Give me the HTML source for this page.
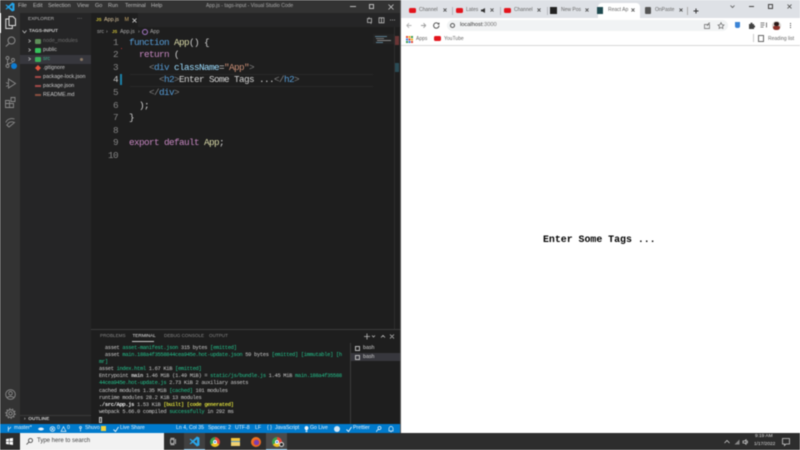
<!DOCTYPE html>
<html><head><meta charset="utf-8"><style>
*{box-sizing:border-box}
html,body{margin:0;padding:0;width:800px;height:450px;overflow:hidden;background:#fff}
#r{position:absolute;left:0;top:0;width:800px;height:450px;overflow:hidden;filter:blur(.45px);font-family:"Liberation Sans",sans-serif}
.b{position:absolute}
.t{position:absolute;white-space:pre;line-height:1}
.c{font-family:"Liberation Mono",monospace;font-size:9.3px;letter-spacing:-.58px;color:#d4d4d4}
.m{font-family:"Liberation Mono",monospace;font-size:5.4px;letter-spacing:-.31px;color:#ccc}
.n{font-family:"Liberation Mono",monospace;font-size:9.3px;letter-spacing:-.58px;color:#858585;text-align:right;width:12px;left:106px}
.s{font-size:5.5px;color:#bbb}
.x{font-size:5.3px;color:#ccc}
.st{font-size:5.2px;color:#e8f3fb;top:426px}
.ct{font-size:5px;color:#666}
.k{color:#569cd6}.f{color:#dcdcaa}.p{color:#c586c0}.a{color:#808080}.v{color:#9cdcfe}.g{color:#ce9178}
.gr{color:#23c48e}.y{color:#d5d53a}
svg{position:absolute;overflow:visible}
</style></head><body><div id="r">

<!-- VS Code backgrounds -->
<div class="b" style="left:0;top:0;width:400px;height:13px;background:#333"></div>
<div class="b" style="left:0;top:13px;width:20px;height:411px;background:#333"></div>
<div class="b" style="left:20px;top:13px;width:71px;height:411px;background:#252526"></div>
<div class="b" style="left:91px;top:13px;width:309px;height:411px;background:#1e1e1e"></div>
<div class="b" style="left:91px;top:13px;width:309px;height:14px;background:#252526"></div>
<div class="b" style="left:91px;top:13px;width:47px;height:14px;background:#1e1e1e"></div>
<div class="b" style="left:400px;top:0;width:1px;height:433px;background:#555"></div>

<!-- Title bar -->
<svg style="left:5px;top:2px" width="10" height="10" viewBox="0 0 10 10"><path d="M7.2 .5 3.4 4 1.4 2.5.5 3l2 2-2 2 .9.5 2-1.500 3.800 3.500 2.300-1V1.500zM7.300 3 4.800 5l2.500 2z" fill="#23a3e8" fill-rule="evenodd"/></svg>
<span class="t s" style="left:18px;top:4px">File</span>
<span class="t s" style="left:33px;top:4px">Edit</span>
<span class="t s" style="left:48px;top:4px">Selection</span>
<span class="t s" style="left:77px;top:4px">View</span>
<span class="t s" style="left:95px;top:4px">Go</span>
<span class="t s" style="left:108px;top:4px">Run</span>
<span class="t s" style="left:125px;top:4px">Terminal</span>
<span class="t s" style="left:151px;top:4px">Help</span>
<span class="t" style="left:206px;top:4px;font-size:5px;color:#aaa">App.js - tags-input - Visual Studio Code</span>
<div class="b" style="left:350px;top:6px;width:6px;height:1px;background:#bbb"></div>
<div class="b" style="left:369px;top:4px;width:5px;height:5px;border:1px solid #bbb"></div>
<svg style="left:388px;top:4px" width="6" height="6"><path d="M.5.500l5 5M5.500.500l-5 5" stroke="#ccc" stroke-width=".8"/></svg>

<!-- Activity bar -->
<div class="b" style="left:0;top:13px;width:1px;height:20px;background:#fff"></div>
<svg style="left:5px;top:16px" width="11" height="13" fill="none" stroke="#ddd" stroke-width="1"><path d="M4 .5h4l2.500 2.500v6.500H4zM4 3H.8v9.500h6.500V9.500"/></svg>
<svg style="left:5px;top:36px" width="11" height="11" fill="none" stroke="#8a8a8a" stroke-width="1"><circle cx="6.500" cy="4.500" r="3.500"/><path d="M4 7.500 .8 10.500"/></svg>
<svg style="left:5px;top:56px" width="14" height="14" fill="none" stroke="#8a8a8a" stroke-width=".9"><circle cx="2.500" cy="2" r="1.500"/><circle cx="2.500" cy="10" r="1.500"/><circle cx="8" cy="4" r="1.500"/><path d="M2.500 3.500v5M8 5.500c0 2-5 1.500-5.500 3"/></svg>
<div class="b" style="left:10.500px;top:63px;width:6px;height:6px;border-radius:3px;background:#0e7bd0"></div>
<svg style="left:5px;top:77px" width="11" height="12" fill="none" stroke="#8a8a8a" stroke-width=".9"><path d="M3.500 2v9l7-4.500zM1 9.500l2-1M1 5.500l2 1"/></svg>
<svg style="left:5px;top:97px" width="11" height="11" fill="none" stroke="#8a8a8a" stroke-width=".9"><path d="M.5 3.500h4v3h-4zM.5 6.500h4v4h-4zM4.500 6.500h4v4h-4zM6 .5h4v4H6z"/></svg>
<svg style="left:5px;top:117px" width="11" height="11" fill="none" stroke="#8a8a8a" stroke-width=".9"><path d="M.8 5.500C2 2 6 .8 9.500 2M2.500 7.500C3.500 5 6.500 4 9.500 5.500L4 10 1.800 8z"/></svg>
<svg style="left:5px;top:389px" width="11" height="11" fill="none" stroke="#8a8a8a" stroke-width=".9"><circle cx="5.500" cy="5.500" r="4.800"/><circle cx="5.500" cy="4.300" r="1.800"/><path d="M2.200 9c.6-2 5.900-2 6.600 0"/></svg>
<svg style="left:5px;top:408px" width="11" height="11" fill="none" stroke="#8a8a8a" stroke-width="1"><circle cx="5.500" cy="5.500" r="1.700"/><circle cx="5.500" cy="5.500" r="3.800"/><circle cx="5.500" cy="5.500" r="4.800" stroke-dasharray="1.500 1.500"/></svg>

<!-- Sidebar -->
<span class="t x" style="left:28px;top:17.500px;font-size:4.800px;color:#bbb">EXPLORER</span>
<span class="t x" style="left:77px;top:17px;color:#bbb">···</span>
<span class="t x" style="left:29px;top:29.500px;font-size:4.800px;font-weight:bold;color:#ccc">TAGS-INPUT</span>
<svg style="left:22px;top:30px" width="5" height="4"><path d="M.5.500 2.500 3l2-2.500" fill="none" stroke="#ccc" stroke-width=".7"/></svg>
<div class="b" style="left:20px;top:55px;width:71px;height:9px;background:#37373d"></div>
<svg style="left:28px;top:39px" width="3" height="23" fill="none" stroke="#ccc" stroke-width=".7"><path d="M.5.500l2 1.500-2 1.500M.5 9.500l2 1.500-2 1.500M.5 18.500l2 1.500-2 1.500"/></svg>
<div class="b" style="left:35px;top:39px;width:6px;height:5px;background:#5f8f5a;border-radius:1px"></div>
<div class="b" style="left:35px;top:48px;width:6px;height:5px;background:#36c35c;border-radius:1px"></div>
<div class="b" style="left:35px;top:57px;width:6px;height:5px;background:#3bb05a;border-radius:1px"></div>
<svg style="left:35px;top:65px" width="6" height="6"><path d="M3 0 6 3 3 6 0 3z" fill="#e2533c"/></svg>
<div class="b" style="left:35px;top:76px;width:6px;height:2px;background:#a24a48"></div>
<div class="b" style="left:35px;top:85px;width:6px;height:2px;background:#a24a48"></div>
<div class="b" style="left:35px;top:94px;width:6px;height:2px;background:#8a4e40"></div>
<span class="t x" style="left:43px;top:38.500px;color:#6d6d6d">node_modules</span>
<span class="t x" style="left:43px;top:47.500px">public</span>
<span class="t x" style="left:43px;top:56.500px;color:#3cae8c">src</span>
<div class="b" style="left:80px;top:58px;width:3px;height:3px;border-radius:2px;background:#8c7a66"></div>
<span class="t x" style="left:43px;top:65.500px">.gitignore</span>
<span class="t x" style="left:43px;top:74.500px">package-lock.json</span>
<span class="t x" style="left:43px;top:84px">package.json</span>
<span class="t x" style="left:43px;top:93px">README.md</span>
<div class="b" style="left:20px;top:415px;width:71px;height:1px;background:#3a3a3a"></div>
<span class="t x" style="left:24px;top:417.500px;font-size:4.800px;font-weight:bold;color:#ccc">›  OUTLINE</span>

<!-- Editor tab / breadcrumb -->
<span class="t" style="left:96px;top:18px;font-size:4.500px;font-weight:bold;color:#d6c63a">JS</span>
<span class="t x" style="left:104px;top:17.500px;font-size:5.400px;color:#e0c9a0">App.js</span>
<span class="t x" style="left:124.500px;top:17.500px;color:#c9a86a">M</span>
<svg style="left:132px;top:18px" width="5" height="5"><path d="M.5.500l4 4M4.500.500l-4 4" stroke="#ddd" stroke-width=".8"/></svg>
<span class="t x" style="left:97px;top:29.500px;color:#aaa">src</span>
<span class="t x" style="left:106px;top:29.500px;color:#aaa">›</span>
<span class="t" style="left:112px;top:30px;font-size:4.300px;font-weight:bold;color:#d6c63a">JS</span>
<span class="t x" style="left:120px;top:29.500px;color:#aaa">App.js</span>
<span class="t x" style="left:138px;top:29.500px;color:#aaa">›</span>
<div class="b" style="left:142px;top:29px;width:6px;height:6px;border:1px solid #a779c9;border-radius:3px"></div>
<span class="t x" style="left:150px;top:29.500px;color:#aaa">App</span>
<svg style="left:367px;top:17px" width="30" height="7" fill="none" stroke="#bbb" stroke-width=".8"><path d="M.5 1.500h4v4h-4zM2 .3v2M4 5.500v1.400M12 .8h5v5h-5zM14.500.8v5"/><path d="M23 3h5" stroke-dasharray="1 1"/></svg>

<!-- Code -->
<div class="b" style="left:130px;top:73.500px;width:243px;height:1px;background:#282828"></div>
<div class="b" style="left:130px;top:85.500px;width:243px;height:1px;background:#282828"></div>
<div class="b" style="left:120px;top:74px;width:2px;height:11px;background:#1b81a8"></div>
<div class="b" style="left:121px;top:48px;width:1px;height:1px;background:#b33"></div>
<span class="t n" style="top:37.600px">1</span>
<span class="t n" style="top:50.200px">2</span>
<span class="t n" style="top:62.800px">3</span>
<span class="t n" style="top:75.400px;color:#c6c6c6">4</span>
<span class="t n" style="top:88px">5</span>
<span class="t n" style="top:100.600px">6</span>
<span class="t n" style="top:113.200px">7</span>
<span class="t n" style="top:125.800px">8</span>
<span class="t n" style="top:138.400px">9</span>
<span class="t n" style="top:151px">10</span>
<span class="t c" style="left:129px;top:37.600px"><span class="k">function</span> <span class="f">App</span>() {</span>
<span class="t c" style="left:129px;top:50.200px">  <span class="p">return</span> (</span>
<span class="t c" style="left:129px;top:62.800px">    <span class="a">&lt;</span><span class="k">div</span> <span class="v">className</span>=<span class="g">"App"</span><span class="a">&gt;</span></span>
<span class="t c" style="left:129px;top:75.400px">      <span class="a">&lt;</span><span class="k">h2</span><span class="a">&gt;</span>Enter Some Tags ...<span class="a">&lt;/</span><span class="k">h2</span><span class="a">&gt;</span></span>
<span class="t c" style="left:129px;top:88px">    <span class="a">&lt;/</span><span class="k">div</span><span class="a">&gt;</span></span>
<span class="t c" style="left:129px;top:100.600px">  );</span>
<span class="t c" style="left:129px;top:113.200px">}</span>
<span class="t c" style="left:129px;top:138.400px"><span class="p">export</span> <span class="p">default</span> <span class="f">App</span>;</span>

<!-- Minimap -->
<div class="b" style="left:373px;top:34px;width:21px;height:10px;background:#232323"></div>
<div class="b" style="left:375px;top:36px;width:12px;height:1px;background:#5b7f92"></div>
<div class="b" style="left:376px;top:38px;width:8px;height:1px;background:#777"></div>
<div class="b" style="left:377px;top:40px;width:14px;height:1px;background:#8a8a8a"></div>
<div class="b" style="left:376px;top:42px;width:7px;height:1px;background:#5b7f92"></div>
<div class="b" style="left:394px;top:36px;width:5px;height:9px;background:#6a3535"></div>
<div class="b" style="left:394px;top:63px;width:5px;height:9px;background:#2a4b55"></div>
<div class="b" style="left:394px;top:27px;width:1px;height:302px;background:#2e2e2e"></div>

<!-- Panel -->
<div class="b" style="left:91px;top:329px;width:309px;height:1px;background:#3c3c3c"></div>
<span class="t x" style="left:100px;top:334px;font-size:4.600px;color:#8a8a8a">PROBLEMS</span>
<span class="t x" style="left:132.500px;top:334px;font-size:4.600px;color:#e6e6e6">TERMINAL</span>
<div class="b" style="left:132px;top:341px;width:22px;height:1px;background:#ccc"></div>
<span class="t x" style="left:164px;top:334px;font-size:4.600px;color:#8a8a8a">DEBUG CONSOLE</span>
<span class="t x" style="left:209px;top:334px;font-size:4.600px;color:#8a8a8a">OUTPUT</span>
<svg style="left:363px;top:333px" width="34" height="7" fill="none" stroke="#bbb" stroke-width=".8"><path d="M4 .5v6M1 3.500h6M9 2.500l1.500 1.500L12 2.500M18 4.500l2-2 2 2M27 1.500l4 4M31 1.500l-4 4"/></svg>
<div class="b" style="left:350px;top:343px;width:1px;height:81px;background:#3c3c3c"></div>
<div class="b" style="left:351px;top:353px;width:49px;height:8px;background:#37373d"></div>
<div class="b" style="left:355px;top:345.500px;width:5px;height:5px;border:.7px solid #bbb"></div>
<div class="b" style="left:355px;top:354.500px;width:5px;height:5px;border:.7px solid #bbb"></div>
<span class="t x" style="left:363px;top:345.500px">bash</span>
<span class="t x" style="left:363px;top:354.500px">bash</span>

<span class="t m" style="left:99px;top:346.300px">  asset <span class="gr">asset-manifest.json</span> 315 bytes <span class="gr">[emitted]</span></span>
<span class="t m" style="left:99px;top:353.300px">  asset <span class="gr">main.188a4f3558844cea945e.hot-update.json</span> 59 bytes <span class="gr">[emitted] [immutable]</span> <span class="gr">[h</span></span>
<span class="t m" style="left:99px;top:360.300px"><span class="gr">mr]</span></span>
<span class="t m" style="left:99px;top:367.300px">asset <span class="gr">index.html</span> 1.67 KiB <span class="gr">[emitted]</span></span>
<span class="t m" style="left:99px;top:374.300px">Entrypoint <b>main</b> 1.46 MiB (1.49 MiB) = <span class="gr">static/js/bundle.js</span> 1.45 MiB <span class="gr">main.188a4f35588</span></span>
<span class="t m" style="left:99px;top:381.300px"><span class="gr">44cea945e.hot-update.js</span> 2.73 KiB 2 auxiliary assets</span>
<span class="t m" style="left:99px;top:388.500px">cached modules 1.35 MiB <span class="gr">[cached]</span> 101 modules</span>
<span class="t m" style="left:99px;top:396px">runtime modules 28.2 KiB 13 modules</span>
<span class="t m" style="left:99px;top:403.300px"><b style="color:#eee">./src/App.js</b> 1.53 KiB <b class="y">[built]</b> <b class="y">[code generated]</b></span>
<span class="t m" style="left:99px;top:410.300px">webpack 5.66.0 compiled <span class="gr">successfully</span> in 292 ms</span>
<div class="b" style="left:99px;top:417px;width:3px;height:6px;border:.7px solid #ccc"></div>

<!-- Status bar -->
<div class="b" style="left:0;top:424px;width:400px;height:9px;background:#007acc"></div>
<svg style="left:7px;top:425.500px" width="100" height="6" fill="none" stroke="#e8f3fb" stroke-width=".7"><path d="M1.300.5v5M3.800.8c0 2-2.500 1.500-2.500 3"/><path d="M31 3c1-2 5-2 6 0-1 2-5 2-6 0z" fill="#e8f3fb" stroke="none"/><circle cx="45.500" cy="3" r="2.400"/><path d="M44.300 1.800l2.400 2.400M46.700 1.800l-2.400 2.400"/><path d="M56.500.6 59 5.400h-5z"/><circle cx="73.500" cy="1.500" r="1"/><path d="M73.500 2.500v3"/></svg>
<div class="b" style="left:101px;top:426px;width:5px;height:5px;background:#f2d33a"></div>
<svg style="left:113px;top:425.500px" width="6" height="6" fill="none" stroke="#e8f3fb" stroke-width=".9"><path d="M.5 3.500 2.500 5.500 5.500 1"/></svg>
<span class="t st" style="left:14px">master*</span>
<span class="t st" style="left:57px">0</span>
<span class="t st" style="left:67px">0</span>
<span class="t st" style="left:85px">Shuvo</span>
<span class="t st" style="left:120px">Live Share</span>
<span class="t st" style="left:176px">Ln 4, Col 35</span>
<span class="t st" style="left:208px">Spaces: 2</span>
<span class="t st" style="left:235px">UTF-8</span>
<span class="t st" style="left:255px">LF</span>
<span class="t st" style="left:267px">{ }</span>
<span class="t st" style="left:275px">JavaScript</span>
<svg style="left:304px;top:425.500px" width="5" height="6" fill="#e8f3fb"><path d="M2.500 0a2 2 0 0 1 1 3.700V4.500h-2v-.8A2 2 0 0 1 2.500 0zM1.500 5h2v1h-2z"/></svg>
<span class="t st" style="left:310px">Go Live</span>
<div class="b" style="left:334px;top:425.500px;width:6px;height:6px;border-radius:3px;background:#cfe6f6"></div>
<svg style="left:346px;top:425.500px" width="6" height="6" fill="none" stroke="#e8f3fb" stroke-width=".9"><path d="M.5 3.500 2.500 5.500 5.500 1"/></svg>
<span class="t st" style="left:353px">Prettier</span>
<svg style="left:376px;top:426px" width="6" height="6" fill="none" stroke="#e8f3fb" stroke-width=".7"><circle cx="3.500" cy="2" r="1.500"/><path d="M.5 6c0-2 1.500-2.500 3-2.500"/></svg>
<svg style="left:388px;top:426px" width="6" height="6" fill="none" stroke="#e8f3fb" stroke-width=".7"><path d="M1 5V2.500a2 2 0 0 1 4 0V5zM2.500 5.800h1"/></svg>

<!-- Chrome -->
<div class="b" style="left:401px;top:0;width:399px;height:18px;background:#dee1e6"></div>
<div class="b" style="left:401px;top:18px;width:399px;height:14px;background:#fff"></div>
<div class="b" style="left:401px;top:32px;width:399px;height:14px;background:#fff;border-bottom:1px solid #d8d8d8"></div>
<div class="b" style="left:598px;top:3px;width:42px;height:15px;background:#fff;border-radius:4px 4px 0 0"></div>
<div class="b" style="left:452px;top:7px;width:1px;height:8px;background:#b5b8bd;box-shadow:48px 0 #b5b8bd,95px 0 #b5b8bd"></div>

<!-- tabs -->
<div class="b" style="left:409px;top:8px;width:7px;height:5px;background:#e3141c;border-radius:1.500px"></div>
<div class="b" style="left:456px;top:8px;width:7px;height:5px;background:#e3141c;border-radius:1.500px"></div>
<div class="b" style="left:504px;top:8px;width:7px;height:5px;background:#e3141c;border-radius:1.500px"></div>
<div class="b" style="left:550px;top:7px;width:7px;height:7px;background:#222"></div>
<div class="b" style="left:597px;top:7px;width:6px;height:7px;background:#1f4a50"></div>
<div class="b" style="left:645px;top:7px;width:6px;height:7px;background:#555;border-radius:1px"></div>
<span class="t ct" style="left:419px;top:8px">Channel</span>
<span class="t ct" style="left:466px;top:8px">Lates</span>
<span class="t ct" style="left:514px;top:8px">Channel</span>
<span class="t ct" style="left:561px;top:8px">New Pos</span>
<span class="t ct" style="left:608px;top:8px">React Ap</span>
<span class="t ct" style="left:655px;top:8px">OnPaste</span>
<svg style="left:443px;top:8px" width="205" height="5" fill="none" stroke="#333" stroke-width=".8"><path d="M.5.500l3 3M3.500.500l-3 3M47.500.500l3 3M50.500.500l-3 3M94.500.500l3 3M97.500.500l-3 3M142.500.500l3 3M145.500.500l-3 3M188.500.500l3 3M191.500.500l-3 3"/></svg>
<svg style="left:481px;top:8px" width="5" height="5"><path d="M0 1.500h1.500L4 0v5L1.500 3.500H0z" fill="#333"/></svg>
<svg style="left:679px;top:8px" width="4" height="4"><path d="M.5.500l3 3M3.500.500l-3 3" stroke="#333" stroke-width=".8"/></svg>
<div class="b" style="left:687px;top:7px;width:1px;height:8px;background:#aaa"></div>
<svg style="left:693px;top:8px" width="6" height="6"><path d="M3 .5v5M.5 3h5" stroke="#333" stroke-width="1"/></svg>
<svg style="left:730px;top:5px" width="5" height="4"><path d="M.5.500l2 2 2-2" fill="none" stroke="#555" stroke-width=".8"/></svg>
<div class="b" style="left:749px;top:6px;width:5px;height:1px;background:#444"></div>
<div class="b" style="left:768px;top:4px;width:5px;height:5px;border:.8px solid #444"></div>
<svg style="left:787px;top:4px" width="5" height="5"><path d="M.5.500l4 4M4.500.500l-4 4" stroke="#444" stroke-width=".8"/></svg>

<!-- toolbar -->
<svg style="left:406px;top:22px" width="36" height="7" fill="none" stroke-width=".9"><path d="M5.500 3.500H.8M3 1.200.8 3.500 3 5.800" stroke="#b0b0b0"/><path d="M15 3.500h4.700M17.500 1.200l2.200 2.300-2.200 2.300" stroke="#9a9a9a"/><path d="M33 3.500a2.700 2.700 0 1 1-.8-1.900M33 .8v1.400h-1.400" stroke="#444"/></svg>
<div class="b" style="left:447px;top:20px;width:281px;height:11px;background:#f1f3f4;border-radius:6px"></div>
<div class="b" style="left:450px;top:23px;width:5px;height:5px;border:.7px solid #555;border-radius:3px"></div>
<span class="t" style="left:460px;top:22.500px;font-size:5.700px;color:#333">localhost<span style="color:#777">:3000</span></span>
<svg style="left:704px;top:22px" width="20" height="7" fill="none" stroke="#666" stroke-width=".7"><path d="M.5 2.500h5v4h-5zM3 4l2-3h1"/><path d="M17 .7l1 2 2 .3-1.500 1.500.4 2-1.900-1-1.900 1 .4-2L14 3l2-.3z"/></svg>
<div class="b" style="left:735px;top:22px;width:5px;height:6px;background:#3c84d6;border-radius:0 0 2px 2px"></div>
<svg style="left:748px;top:22px" width="7" height="7"><path d="M1 2h1.500V.8h2V2H6v1.500h1v2H6V7H1z" fill="#444"/></svg>
<svg style="left:760px;top:22px" width="8" height="7" fill="none" stroke="#555" stroke-width=".8"><path d="M.5 1h4M.5 3h4M.5 5h3M6.500.5v5"/></svg>
<div class="b" style="left:772px;top:21px;width:9px;height:9px;border-radius:5px;background:#d8d4d0"></div>
<div class="b" style="left:774px;top:22px;width:5px;height:4px;border-radius:2px;background:#2a1a18"></div>
<div class="b" style="left:773px;top:26px;width:7px;height:4px;background:#8c3028;border-radius:2px 2px 3px 3px"></div>
<div class="b" style="left:790px;top:23px;width:1px;height:1px;background:#444;box-shadow:0 2px #444,0 4px #444"></div>

<!-- bookmarks -->
<div class="b" style="left:406px;top:36px;width:1.500px;height:1.500px;background:#e04a3c;box-shadow:2.500px 0 #f2b01e,5px 0 #3a9a4a,0 2.500px #3a80e0,2.500px 2.500px #e04a3c,5px 2.500px #f2b01e,0 5px #3a9a4a,2.500px 5px #3a80e0,5px 5px #e04a3c"></div>
<span class="t ct" style="left:416px;top:36.500px">Apps</span>
<div class="b" style="left:434px;top:36px;width:7px;height:5px;background:#e3141c;border-radius:1.500px"></div>
<span class="t ct" style="left:444px;top:36.500px">YouTube</span>
<div class="b" style="left:753px;top:34px;width:1px;height:8px;background:#ccc"></div>
<div class="b" style="left:758px;top:35px;width:6px;height:7px;border:.7px solid #666"></div>
<span class="t ct" style="left:768px;top:36.500px">Reading list</span>

<!-- Page -->
<span class="t" style="left:543px;top:235px;font-family:'Liberation Mono',monospace;font-weight:bold;font-size:9.900px;color:#000">Enter Some Tags ...</span>

<!-- Taskbar -->
<div class="b" style="left:0;top:433px;width:800px;height:17px;background:#2d2d2d"></div>
<svg style="left:6px;top:438px" width="7" height="7"><path d="M0 1l3-.5v2.700H0zM3.500.4 7 0v3.200H3.500zM0 3.800h3v2.700L0 6zM3.500 3.800H7V7l-3.500-.5z" fill="#fff"/></svg>
<div class="b" style="left:20px;top:433px;width:144px;height:17px;background:#f2f2f2"></div>
<svg style="left:26px;top:438px" width="7" height="7" fill="none" stroke="#333" stroke-width=".8"><circle cx="4.500" cy="2.500" r="2"/><path d="M3 4 .5 6.500"/></svg>
<span class="t" style="left:37px;top:438px;font-size:6px;color:#444">Type here to search</span>
<svg style="left:170px;top:438px" width="7" height="7" fill="none" stroke="#ccc" stroke-width=".8"><path d="M.5 1.500h3.500v4H.5zM5.500 1v5M.5.300h4M.5 6.700h4"/></svg>
<div class="b" style="left:184px;top:433px;width:21px;height:17px;background:#404040"></div>
<svg style="left:189px;top:436px" width="11" height="11" viewBox="0 0 10 10"><path d="M7.200 .5 3.400 4 1.400 2.500.5 3l2 2-2 2 .9.500 2-1.500 3.800 3.500 2.300-1V1.500zM7.300 3 4.800 5l2.500 2z" fill="#2aa6ea" fill-rule="evenodd"/></svg>
<div class="b" style="left:184px;top:449px;width:21px;height:1px;background:#7fb8de"></div>
<div class="b" style="left:210px;top:437px;width:10px;height:10px;border-radius:5px;background:conic-gradient(#e5453a 0 33%,#f0c020 33% 66%,#3aa04a 66%)"></div>
<div class="b" style="left:213px;top:440px;width:4px;height:4px;border-radius:2px;background:#3a80e0;border:.5px solid #fff"></div>
<div class="b" style="left:231px;top:438px;width:9px;height:8px;background:linear-gradient(#f3c840 0 35%,#4a90c8 35% 50%,#f0d070 50%)"></div>
<div class="b" style="left:251px;top:437px;width:10px;height:10px;border-radius:5px;background:radial-gradient(circle at 55% 55%,#7a3fb0 0 32%,#f05a20 36%,#f7a020 100%)"></div>
<div class="b" style="left:266px;top:433px;width:21px;height:17px;background:#4a4a4a"></div>
<div class="b" style="left:272px;top:437px;width:10px;height:10px;border-radius:5px;background:conic-gradient(#e5453a 0 33%,#f0c020 33% 66%,#3aa04a 66%)"></div>
<div class="b" style="left:275px;top:440px;width:4px;height:4px;border-radius:2px;background:#3a80e0;border:.5px solid #fff"></div>
<div class="b" style="left:279px;top:442px;width:5px;height:5px;border-radius:3px;background:#222;border:.8px solid #ddd"></div>
<div class="b" style="left:266px;top:449px;width:21px;height:1px;background:#7fb8de"></div>

<svg style="left:724px;top:439px" width="25" height="6" fill="none" stroke="#ccc" stroke-width=".8"><path d="M.5 4 3 1.500 5.500 4"/><path d="M10.500 5.500h5v-5l-5 5z" fill="#888" stroke="none"/><path d="M19 2h1.500L22 .7v4.600L20.500 4H19zM23 1.500c.7 1 .7 2 0 3"/></svg>
<span class="t" style="left:755px;top:434.500px;font-size:4.800px;color:#ddd">9:19 AM</span>
<span class="t" style="left:754px;top:442.500px;font-size:4.800px;color:#ddd">1/17/2022</span>
<svg style="left:782px;top:438px" width="9" height="9" fill="none" stroke="#ccc" stroke-width=".8"><path d="M.5.500h7v5.500H4L2.500 7.500V6h-2z"/></svg>

</div></body></html>
